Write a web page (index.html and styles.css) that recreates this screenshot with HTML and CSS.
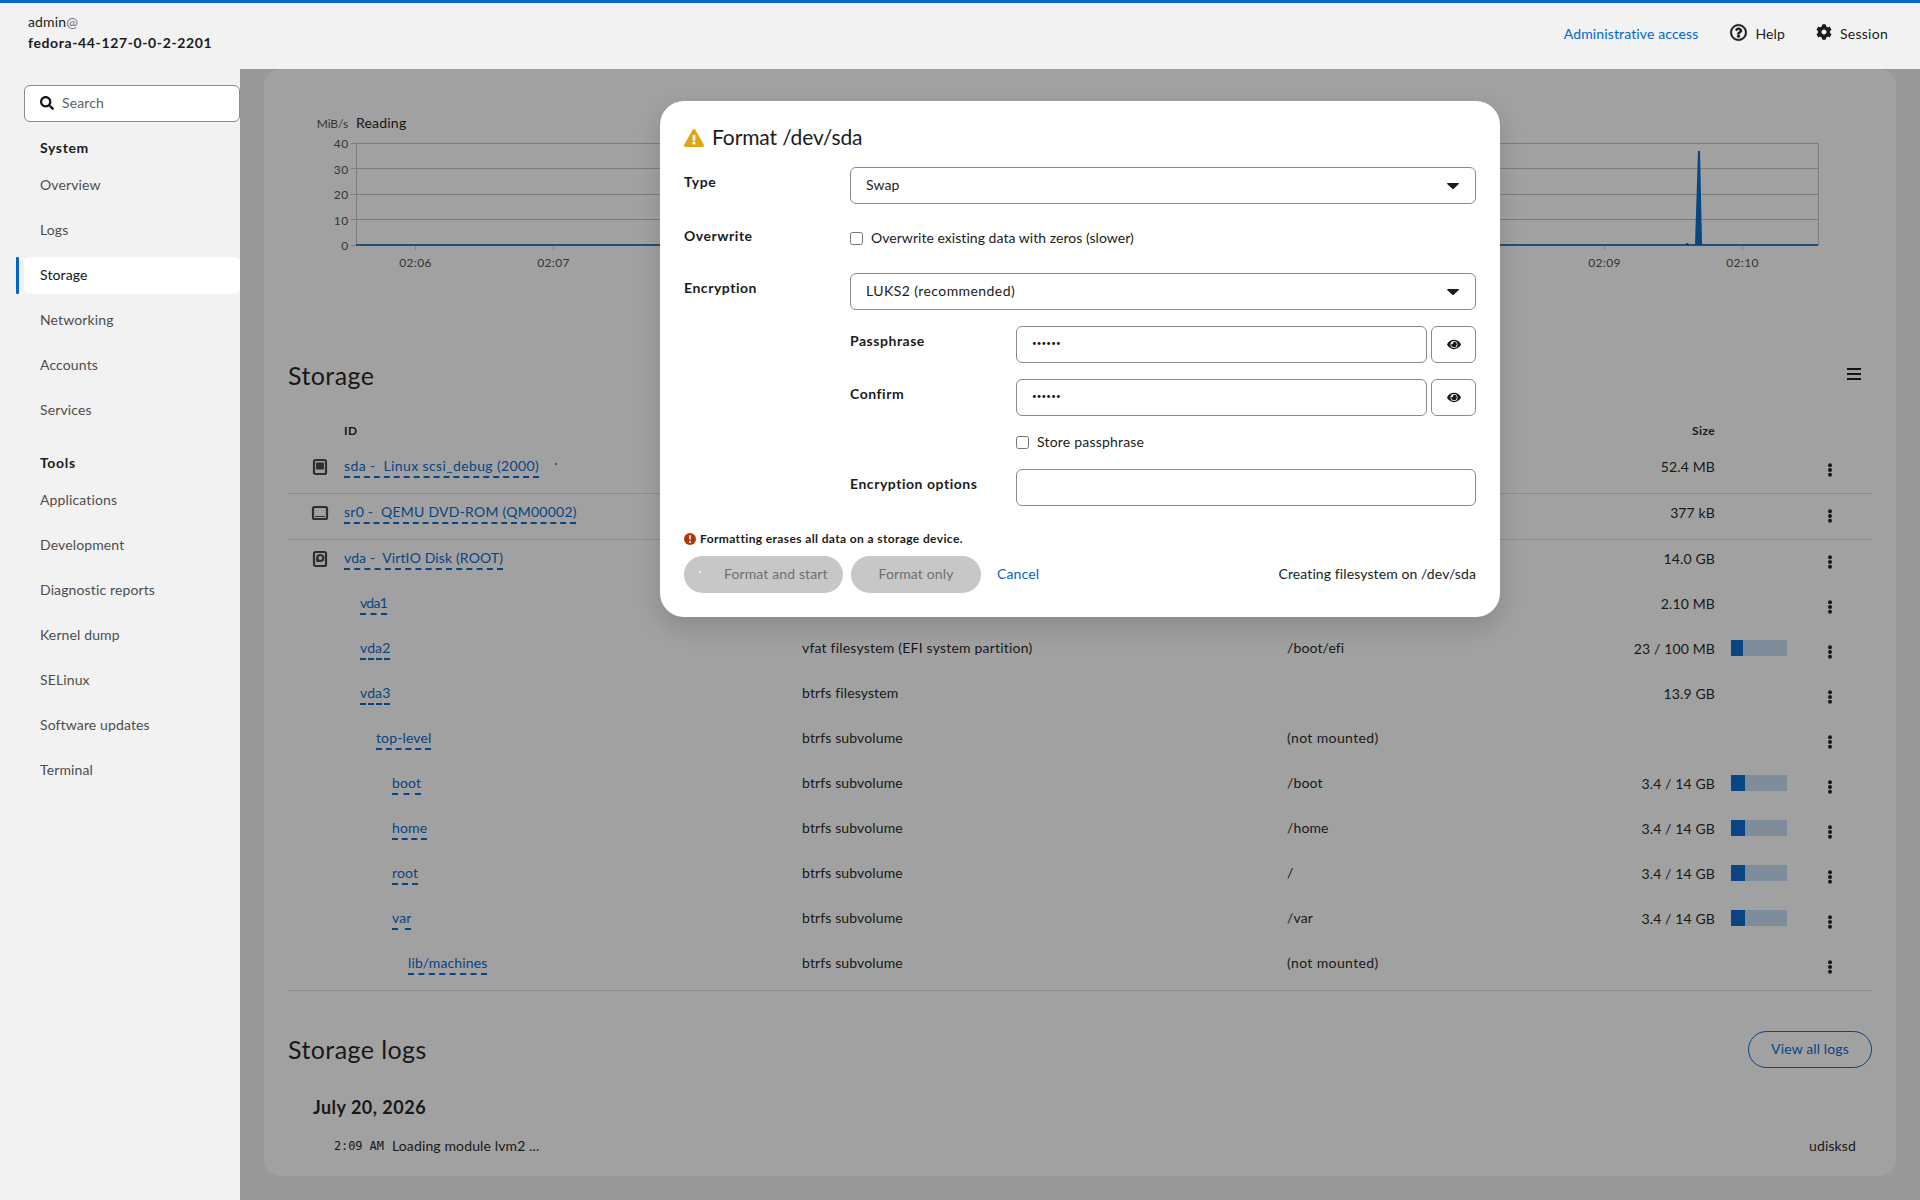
FILE: index.html
```html
<!DOCTYPE html>
<html lang="en">
<head>
<meta charset="utf-8">
<title>Storage - admin@fedora-44-127-0-0-2-2201</title>
<link rel="stylesheet" href="styles.css">
</head>
<body>
<svg class="defs" aria-hidden="true">
  <symbol id="i-kebab" viewBox="0 0 4 14"><circle cx="2" cy="2.200" r="2"/><circle cx="2" cy="7" r="2"/><circle cx="2" cy="11.800" r="2"/></symbol>
  <symbol id="i-eye" viewBox="0 0 576 512"><path d="M288 144a110.940 110.940 0 0 0-31.240 5 55.400 55.400 0 0 1 7.240 27 56 56 0 0 1-56 56 55.400 55.400 0 0 1-27-7.240A111.710 111.710 0 1 0 288 144zm284.520 97.400C518.290 135.590 410.930 64 288 64S57.680 135.640 3.480 241.410a32.350 32.350 0 0 0 0 29.190C57.710 376.410 165.070 448 288 448s230.320-71.640 284.520-177.410a32.350 32.350 0 0 0 0-29.190zM288 400a144 144 0 1 1 144-144 143.930 143.930 0 0 1-144 144z"/></symbol>
  <symbol id="i-caret" viewBox="0 0 12 6"><path d="M.7 0h10.600c.6 0 .9.700.5 1.100L6.700 5.700a1 1 0 0 1-1.400 0L.2 1.100C-.2.700.1 0 .7 0z"/></symbol>
</svg>

<header class="topbar">
  <div class="host"><div>admin<span class="at">@</span></div><div class="hostname">fedora-44-127-0-0-2-2201</div></div>
  <nav class="tools">
    <a class="admin-access">Administrative access</a>
    <a class="tool help"><svg width="17" height="17" viewBox="0 0 512 512"><path d="M256 8C119.040 8 8 119.080 8 256c0 137 111.040 248 248 248s248-111 248-248C504 119.080 392.960 8 256 8zm0 448c-110.530 0-200-89.430-200-200 0-110.500 89.470-200 200-200 110.490 0 200 89.460 200 200 0 110.530-89.430 200-200 200zm107.240-255.200c0 67.050-72.420 68.080-72.420 92.860V300c0 6.630-5.370 12-12 12h-45.650c-6.620 0-12-5.370-12-12v-8.660c0-35.740 27.100-50.030 47.580-61.520 17.560-9.840 28.320-16.540 28.320-29.580 0-17.250-22-28.690-39.790-28.690-23.190 0-33.890 10.970-48.940 29.970-4.060 5.120-11.460 6.070-16.670 2.120l-27.820-21.100c-5.110-3.870-6.250-11.060-2.650-16.350C184.850 131.490 214.940 112 261.790 112c49.070 0 101.450 38.300 101.450 88.800zM298 368c0 23.160-18.840 42-42 42s-42-18.840-42-42 18.840-42 42-42 42 18.840 42 42z"/></svg>Help</a>
    <a class="tool session"><svg width="16" height="16" viewBox="0 0 512 512"><path d="M487.400 315.700l-42.600-24.600c4.300-23.200 4.300-47 0-70.200l42.600-24.600c4.900-2.800 7.100-8.600 5.500-14-11.100-35.600-30-67.800-54.700-94.600-3.800-4.100-10-5.100-14.800-2.300L380.800 110c-17.900-15.400-38.500-27.300-60.800-35.100V25.800c0-5.600-3.900-10.500-9.400-11.700-36.700-8.200-74.300-7.800-109.200 0-5.500 1.200-9.400 6.100-9.400 11.700V75c-22.200 7.900-42.800 19.800-60.800 35.100L88.700 85.500c-4.900-2.800-11-1.900-14.800 2.300-24.700 26.700-43.600 58.900-54.700 94.600-1.700 5.400.6 11.200 5.500 14L67.300 221c-4.300 23.200-4.300 47 0 70.200l-42.600 24.600c-4.900 2.800-7.100 8.600-5.500 14 11.100 35.600 30 67.800 54.700 94.600 3.800 4.100 10 5.100 14.800 2.300l42.600-24.600c17.900 15.400 38.500 27.300 60.800 35.100v49.200c0 5.600 3.900 10.500 9.400 11.700 36.700 8.200 74.300 7.800 109.200 0 5.500-1.200 9.400-6.100 9.400-11.700v-49.200c22.200-7.900 42.800-19.800 60.800-35.100l42.600 24.600c4.900 2.800 11 1.900 14.800-2.300 24.700-26.700 43.600-58.900 54.700-94.600 1.500-5.500-.7-11.300-5.600-14.100zM256 336c-44.100 0-80-35.900-80-80s35.900-80 80-80 80 35.900 80 80-35.900 80-80 80z"/></svg>Session</a>
  </nav>
</header>

<div class="shell">
  <aside class="sidebar">
    <div class="search"><svg width="14" height="14" viewBox="0 0 512 512"><path d="M505 442.700L405.300 343c-4.500-4.500-10.600-7-17-7H372c27.600-35.300 44-79.700 44-128C416 93.100 322.900 0 208 0S0 93.100 0 208s93.100 208 208 208c48.300 0 92.700-16.400 128-44v16.300c0 6.400 2.500 12.500 7 17l99.700 99.700c9.400 9.400 24.600 9.400 33.900 0l28.300-28.300c9.400-9.400 9.400-24.600.1-34zM208 336c-70.700 0-128-57.200-128-128 0-70.700 57.200-128 128-128 70.700 0 128 57.200 128 128 0 70.700-57.200 128-128 128z"/></svg>Search</div>
    <h2 class="nav-title">System</h2>
    <nav class="nav">
      <a>Overview</a><a>Logs</a><a class="current">Storage</a><a>Networking</a><a>Accounts</a><a>Services</a>
    </nav>
    <h2 class="nav-title">Tools</h2>
    <nav class="nav">
      <a>Applications</a><a>Development</a><a>Diagnostic reports</a><a>Kernel dump</a><a>SELinux</a><a>Software updates</a><a>Terminal</a>
    </nav>
  </aside>

  <main class="main">
    <div class="card">
      <svg class="plots" width="1608" height="200" viewBox="264 80 1608 200">
        <g class="grid">
          <path d="M351 143.500H1043M351 168.500H1043M351 194.500H1043M351 219.500H1043M351 245.500H1043M356.500 143V246M1043.500 143V246M415.500 246v4M553.500 246v4"/>
          <path d="M1131 143.500H1818M1131 168.500H1818M1131 194.500H1818M1131 219.500H1818M1131 245.500H1818M1131.500 143V246M1818.500 143V246M1604.500 246v4M1742.500 246v4"/>
        </g>
        <path class="base" d="M356 245H1043M1131 245H1818"/>
        <path class="spike" d="M1685 245l1.500-2h1.500l1.500 2zM1695 245l3-94h2l2 92 1 2z"/>
        <text class="unit" x="348" y="128">MiB/s</text>
        <text class="name" x="356" y="128">Reading</text>
        <g class="ticks-y"><text x="348.500" y="148">40</text><text x="348.500" y="174">30</text><text x="348.500" y="199">20</text><text x="348.500" y="225">10</text><text x="348.500" y="250">0</text></g>
        <g class="ticks-x"><text x="415.500" y="267">02:06</text><text x="553.500" y="267">02:07</text><text x="1604.500" y="267">02:09</text><text x="1742.500" y="267">02:10</text></g>
      </svg>

      <div class="section-head"><h1>Storage</h1><svg class="burger" width="14" height="13" viewBox="0 0 14 13"><path d="M0 1h14M0 6h14M0 11h14"/></svg></div>

      <div class="table">
        <div class="thead"><span></span><span>ID</span><span></span><span></span><span class="size">Size</span></div>

        <div class="row end"><svg class="dev" width="16" height="16" viewBox="0 0 16 16"><rect x="2" y="1" width="12" height="14" rx="1.500"/><path class="fill" d="M4 4h.7V3h1v1h1V3h1v1h.6V3h1v1h1V3h1v1h.7v6h-.7v1h-1v-1h-1v1h-1v-1h-.6v1h-1v-1h-1v1h-1v-1H4z"/></svg><span><a class="link sda">sda -&nbsp; Linux scsi_debug (2000)</a><i class="spin"></i></span><span></span><span></span><span class="size">52.4 MB</span><span></span><svg class="kebab"><use href="#i-kebab"/></svg></div>

        <div class="row end"><svg class="dev" width="16" height="16" viewBox="0 0 16 16"><rect x="1" y="2" width="14" height="12" rx="1.500"/><path class="thin" d="M3 11.500h10"/></svg><span><a class="link qemu">sr0 -&nbsp; QEMU DVD-ROM (QM00002)</a></span><span></span><span></span><span class="size">377 kB</span><span></span><svg class="kebab"><use href="#i-kebab"/></svg></div>

        <div class="row"><svg class="dev" width="16" height="16" viewBox="0 0 16 16"><rect x="2" y="1" width="12" height="14" rx="1.500"/><circle cx="8.300" cy="7" r="3"/><path class="fill" d="M4.300 7h2.200v2h2v2H4.300z"/></svg><span><a class="link">vda -&nbsp; VirtIO Disk (ROOT)</a></span><span></span><span></span><span class="size">14.0 GB</span><span></span><svg class="kebab"><use href="#i-kebab"/></svg></div>

        <div class="row"><span></span><span class="l1"><a class="link one">vda1</a></span><span></span><span></span><span class="size">2.10 MB</span><span></span><svg class="kebab"><use href="#i-kebab"/></svg></div>
        <div class="row"><span></span><span class="l1"><a class="link">vda2</a></span><span class="vfat">vfat filesystem (EFI system partition)</span><span>/boot/efi</span><span class="size">23 / 100 MB</span><span class="bar"><i style="width:21.500%"></i></span><svg class="kebab"><use href="#i-kebab"/></svg></div>
        <div class="row"><span></span><span class="l1"><a class="link">vda3</a></span><span>btrfs filesystem</span><span></span><span class="size">13.9 GB</span><span></span><svg class="kebab"><use href="#i-kebab"/></svg></div>
        <div class="row"><span></span><span class="l2"><a class="link">top-level</a></span><span>btrfs subvolume</span><span class="none">(not mounted)</span><span></span><span></span><svg class="kebab"><use href="#i-kebab"/></svg></div>
        <div class="row"><span></span><span class="l3"><a class="link">boot</a></span><span>btrfs subvolume</span><span>/boot</span><span class="size">3.4 / 14 GB</span><span class="bar"><i style="width:25%"></i></span><svg class="kebab"><use href="#i-kebab"/></svg></div>
        <div class="row"><span></span><span class="l3"><a class="link">home</a></span><span>btrfs subvolume</span><span>/home</span><span class="size">3.4 / 14 GB</span><span class="bar"><i style="width:25%"></i></span><svg class="kebab"><use href="#i-kebab"/></svg></div>
        <div class="row"><span></span><span class="l3"><a class="link">root</a></span><span>btrfs subvolume</span><span>/</span><span class="size">3.4 / 14 GB</span><span class="bar"><i style="width:25%"></i></span><svg class="kebab"><use href="#i-kebab"/></svg></div>
        <div class="row"><span></span><span class="l3"><a class="link">var</a></span><span>btrfs subvolume</span><span>/var</span><span class="size">3.4 / 14 GB</span><span class="bar"><i style="width:25%"></i></span><svg class="kebab"><use href="#i-kebab"/></svg></div>
        <div class="row end"><span></span><span class="l4"><a class="link">lib/machines</a></span><span>btrfs subvolume</span><span class="none">(not mounted)</span><span></span><span></span><svg class="kebab"><use href="#i-kebab"/></svg></div>
      </div>

      <div class="logs-head"><h1>Storage logs</h1><a class="view-all">View all logs</a></div>
      <h3 class="day">July 20, 2026</h3>
      <div class="log"><time>2:09 AM</time><span class="msg">Loading module lvm2 ...</span><span>udisksd</span></div>
    </div>

    <div class="backdrop">
      <section class="modal">
        <h2 class="modal-title"><svg width="20" height="18" viewBox="0 0 576 512"><path d="M569.500 440c18.500 32-4.700 72-41.600 72H48.100c-36.900 0-60-40.100-41.600-72L246.400 24c18.500-32 64.700-32 83.200 0l239.900 416zM288 354a46 46 0 1 0 0 92 46 46 0 0 0 0-92zm-43.700-165.300l7.400 136c.3 6.400 5.600 11.300 12 11.300h48.500c6.400 0 11.600-5 12-11.300l7.400-136c.4-6.900-5.100-12.700-12-12.700h-63.400c-6.900 0-12.400 5.800-12 12.700z"/></svg>Format /dev/sda</h2>
        <div class="form">
          <label>Type</label>
          <div class="control">Swap<svg width="12" height="6"><use href="#i-caret"/></svg></div>
          <label class="lower">Overwrite</label>
          <div class="check tall"><i class="box"></i><span class="zeros">Overwrite existing data with zeros (slower)</span></div>
          <label>Encryption</label>
          <div class="control"><span class="luks">LUKS2 (recommended)</span><svg width="12" height="6"><use href="#i-caret"/></svg></div>
          <div class="sub">
            <label>Passphrase</label>
            <div class="pair"><div class="control dots">••••••</div><div class="eye"><svg width="14" height="13"><use href="#i-eye"/></svg></div></div>
            <label>Confirm</label>
            <div class="pair"><div class="control dots">••••••</div><div class="eye"><svg width="14" height="13"><use href="#i-eye"/></svg></div></div>
            <div class="check second"><i class="box"></i><span>Store passphrase</span></div>
            <label>Encryption options</label>
            <div class="control"></div>
          </div>
        </div>
        <p class="warn"><svg width="12" height="12" viewBox="0 0 12 12"><circle class="disc" cx="6" cy="6" r="6"/><path class="bang" d="M6 2.300v4.200"/><circle class="dot" cx="6" cy="8.900" r="1"/></svg>Formatting erases all data on a storage device.</p>
        <footer class="actions">
          <span class="btn start"><i></i>Format and start</span><span class="btn only">Format only</span><a class="cancel">Cancel</a><span class="status">Creating filesystem on /dev/sda</span>
        </footer>
      </section>
    </div>
  </main>
</div>
</body>
</html>
```
FILE: styles.css
```css
* { box-sizing: border-box; }
body {
  margin: 0;
  height: 1200px;
  overflow: hidden;
  background: #f2f2f2;
  color: #1b1b1b;
  font: 400 14px/21px Lato, sans-serif;
  letter-spacing: 0.127px;
}
h1, h2, h3, p { margin: 0; }
svg { display: block; fill: currentColor; flex: none; }
i { font-style: normal; display: block; flex: none; }
.defs { display: none; }

/* header */
.topbar {
  height: 69px;
  border-top: 3px solid #06c;
  padding: 8px 32px 0 28px;
  display: flex;
  justify-content: space-between;
}
.at { color: #707070; }
.hostname { font-weight: 700; letter-spacing: 0.62px; }
.tools { display: flex; height: 44px; align-items: center; }
.admin-access { color: #06c; margin-right: 32px; letter-spacing: 0.12px; }
.tool { display: flex; align-items: center; gap: 8px; }
.tool svg { margin-top: -2px; }
.help { margin-right: 31px; }
.help svg { stroke: currentColor; stroke-width: 14px; overflow: visible; }
.session { letter-spacing: 0.26px; }

.shell { display: flex; height: 1131px; }

/* sidebar */
.sidebar { width: 240px; padding: 16px 0 0 24px; flex: none; }
.search {
  height: 37px;
  border: 1px solid #8a8a8a;
  border-radius: 6px;
  background: #fff;
  display: flex;
  align-items: center;
  gap: 8px;
  padding: 0 0 2px 15px;
  color: #606060;
}
.search svg { color: #151515; }
.nav-title { font: 700 14px/21px Lato, sans-serif; letter-spacing: 0.65px; padding: 15px 0 9px 16px; }
.nav { display: grid; gap: 8px; margin-bottom: 8px; }
.nav a { height: 37px; line-height: 35px; padding-left: 16px; border-radius: 6px; color: #4d4d4d; }
.nav .current { background: #fff; color: #151515; position: relative; }
.nav .current::before {
  content: "";
  position: absolute;
  left: -8px;
  top: 0;
  width: 3px;
  height: 37px;
  border-radius: 1px;
  background: #06c;
}

/* page */
.main { flex: 1; position: relative; padding: 0 24px; }
.card { background: #fff; border-radius: 16px; height: 1107px; padding: 11px 24px 0; }
.plots { margin-left: -24px; }
.grid { fill: none; stroke: #c2c2c2; }
.base { fill: none; stroke: #2878b4; stroke-width: 2; }
.spike { fill: #06c; }
.plots text { fill: #4d4d4d; font-size: 12px; letter-spacing: 0.3px; }
.plots .unit { text-anchor: end; letter-spacing: -0.1px; }
.plots .name { fill: #151515; font-size: 14px; letter-spacing: 0.2px; }
.plots .ticks-y text { text-anchor: end; letter-spacing: 0.4px; }
.ticks-x { text-anchor: middle; }
h1 { font: 400 25px/32px Lato, sans-serif; letter-spacing: 0.42px; padding-bottom: 2px; }
.section-head { display: flex; justify-content: space-between; align-items: center; height: 37px; margin-top: 77px; }
.burger { margin: -3px 11px 0 0; fill: none; stroke: #151515; stroke-width: 2; }

.table { margin-top: 28px; }
.thead, .row { display: grid; grid-template-columns: 56px 458px 485px 328px 100px 72px 85px; }
.thead { font: 700 12px/18px Lato, sans-serif; letter-spacing: 0.395px; height: 26px; }
.row { height: 45px; padding-top: 7px; align-items: start; }
.row.end { height: 46px; border-bottom: 1px solid #dcdcdc; }
.size { text-align: right; white-space: nowrap; }
.row .size { padding-top: 1px; }
.l1 { padding-left: 16px; }
.l2 { padding-left: 32px; }
.l3 { padding-left: 48px; }
.l4 { padding-left: 64px; }
.vfat { letter-spacing: 0.2px; }
.none { letter-spacing: 0.37px; }
.link {
  color: #06c;
  text-decoration: underline dashed 1.500px;
  text-underline-offset: 5px;
  text-decoration-skip-ink: none;
}
.sda { letter-spacing: 0.38px; }
.qemu { letter-spacing: 0.25px; }
.one { letter-spacing: -0.7px; }
.spin { display: inline-block; width: 2px; height: 2px; margin: 0 0 6px 16px; border-radius: 1px; background: #06c; }
.dev { margin: 4px 0 0 24px; fill: none; stroke: #404040; stroke-width: 2.200; overflow: visible; }
.dev .fill { fill: #404040; stroke: none; }
.dev .thin { stroke-width: 1; }
.bar { width: 56px; height: 16px; margin: 3px 0 0 16px; background: #c6dcf3; }
.bar i { height: 16px; background: #06c; }
.kebab { width: 4px; height: 14px; margin: 8px 0 0 41px; }

.logs-head { display: flex; justify-content: space-between; align-items: center; height: 37px; margin-top: 40px; }
.view-all {
  height: 37px;
  width: 124px;
  border: 1px solid #06c;
  border-radius: 19px;
  color: #06c;
  line-height: 33px;
  text-align: center;
}
.day { font: 700 18px/27px Lato, sans-serif; letter-spacing: 0.485px; margin: 26px 0 0 25px; }
.log { display: flex; margin: 14px 16px 0 46px; }
.log time { font: 12px/23px "DejaVu Sans Mono", monospace; letter-spacing: -0.1px; width: 58px; }
.log .msg { flex: 1; }

/* dialog */
.backdrop {
  position: absolute;
  inset: 0;
  background: rgba(21, 21, 21, 0.4);
  display: flex;
  justify-content: center;
  align-items: flex-start;
  padding-top: 32px;
}
.modal {
  width: 840px;
  height: 516px;
  border-radius: 24px;
  background: #fff;
  padding: 22px 24px 24px;
  box-shadow: 0 10px 24px rgba(21, 21, 21, 0.16);
}
.modal-title { display: flex; align-items: center; gap: 8px; font: 400 21px/28px Lato, sans-serif; letter-spacing: -0.12px; }
.modal-title svg { color: #dca614; margin-top: 2px; }
.form, .sub { display: grid; grid-template-columns: 166px 1fr; row-gap: 16px; }
.form { margin-top: 16px; }
.sub { grid-column: 2; }
label { font-weight: 700; letter-spacing: 0.53px; padding-top: 4px; }
.lower { padding-top: 5px; }
.control {
  height: 37px;
  border: 1px solid #8a8a8a;
  border-radius: 6px;
  padding: 0 16px 2px 15px;
  display: flex;
  align-items: center;
  justify-content: space-between;
}
.control svg { margin-top: 2px; }
.luks { letter-spacing: 0.42px; }
.pair { display: grid; grid-template-columns: 1fr 45px; gap: 4px; }
.dots { justify-content: flex-start; font-size: 8px; letter-spacing: 0.15px; padding-bottom: 3px; }
.eye { height: 37px; border: 1px solid #8a8a8a; border-radius: 6px; display: flex; align-items: center; justify-content: center; }
.eye svg { margin-top: -1px; }
.check { display: flex; align-items: center; gap: 8px; height: 21px; letter-spacing: 0.2px; }
.check span { padding-bottom: 2px; }
.check.tall { height: 37px; }
.check .zeros { letter-spacing: 0.04px; }
.second { grid-column: 2; }
.box { width: 13px; height: 13px; border: 1px solid #767676; border-radius: 2.500px; }
.warn { display: flex; align-items: center; gap: 4px; margin-top: 24px; font: 700 12px/18px Lato, sans-serif; letter-spacing: 0.375px; }
.disc { fill: #b1380b; }
.bang { stroke: #fff; stroke-width: 1.500; }
.dot { fill: #fff; }
.actions { display: flex; align-items: center; margin-top: 8px; }
.btn { height: 37px; border-radius: 19px; background: #c7c7c7; color: #707070; display: flex; align-items: center; padding-bottom: 2px; }
.start { width: 159px; }
.start i { width: 2px; height: 2px; border-radius: 1px; background: #fff; margin: 0 23px 3px 15px; }
.only { width: 130px; margin-left: 8px; justify-content: center; }
.cancel { color: #06c; margin-left: 16px; padding-bottom: 2px; }
.status { margin-left: auto; letter-spacing: 0.1px; padding-bottom: 2px; }
```
